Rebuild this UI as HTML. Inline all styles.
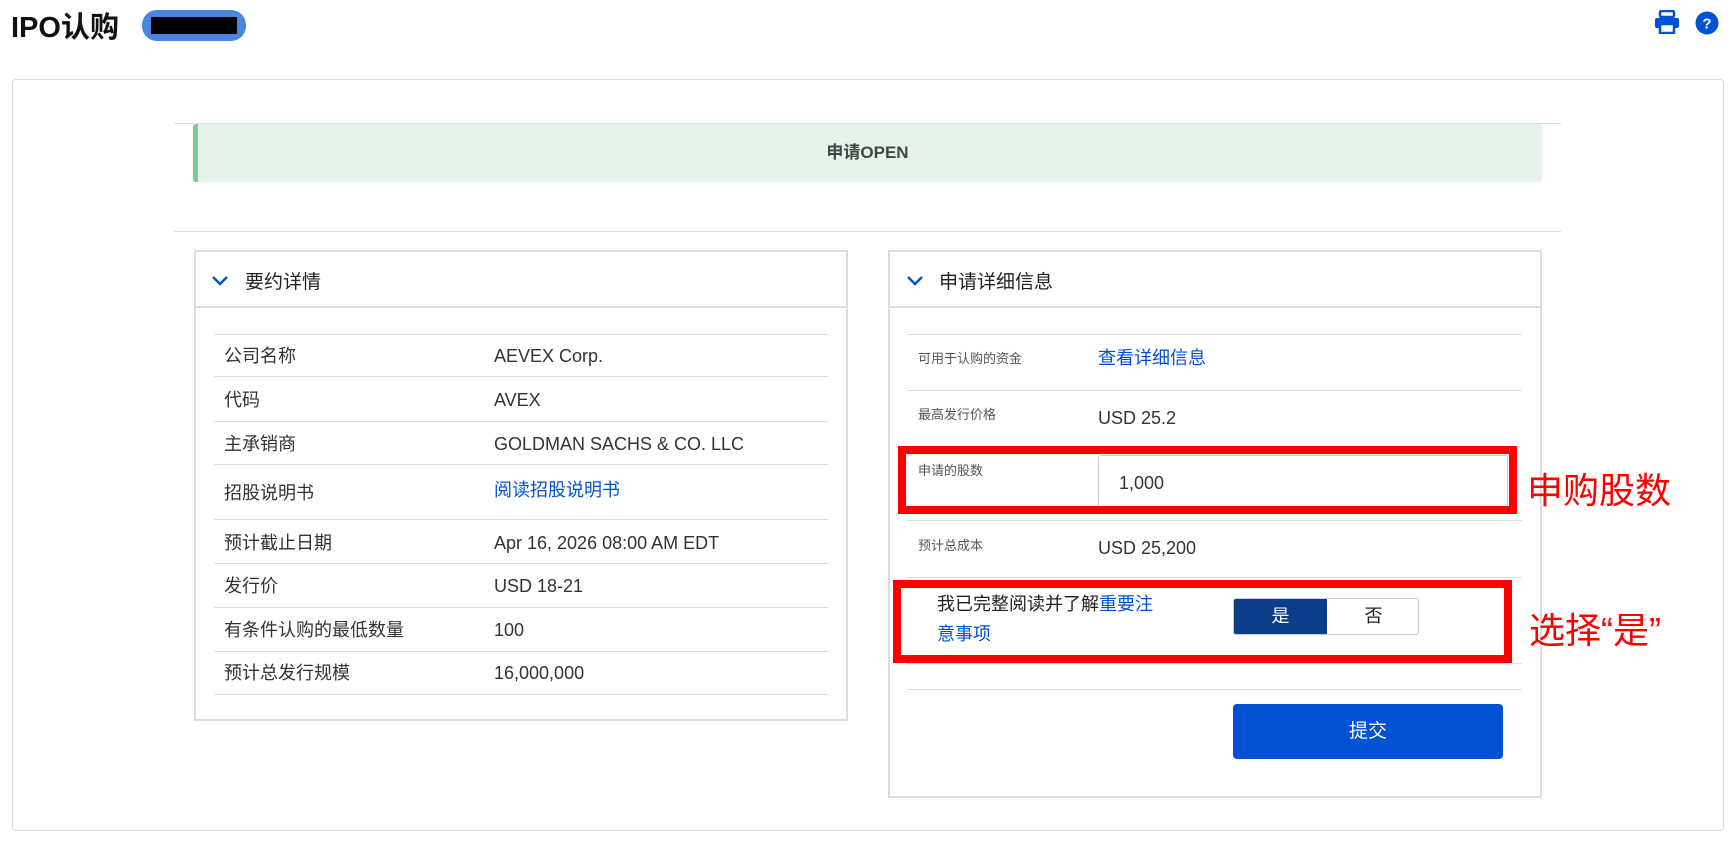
<!DOCTYPE html><html><head><meta charset="utf-8"><style>
*{margin:0;padding:0;box-sizing:border-box}
body{width:1736px;height:844px;background:#fff;font-family:"Liberation Sans","Noto Sans CJK SC",sans-serif;color:#333;position:relative;overflow:hidden}
.a{position:absolute}
.t{white-space:nowrap}
.hl{position:absolute;height:1px;background:#ddd}
.lab{font-size:18px;color:#333}
.rl{font-size:13px;color:#555}
.rv{font-size:18px;color:#333}
</style></head><body>
<div class="a t" style="left:11px;top:4px;font-size:29px;font-weight:bold;color:#111">IPO认购</div>
<div class="a" style="left:142px;top:10px;width:104px;height:31px;background:#4a86e0;border-radius:15px"><div class="a" style="left:9px;top:7px;width:86px;height:17px;background:#000"></div></div>
<svg class="a" style="left:1654px;top:10px" width="26" height="24" viewBox="0 0 26 24"><rect x="6" y="1" width="14" height="6" rx="1.5" fill="none" stroke="#0052d4" stroke-width="2.5"/><rect x="1" y="8" width="24" height="10" rx="2" fill="#0052d4"/><rect x="6" y="14" width="14" height="9" fill="#fff" stroke="#0052d4" stroke-width="2.5"/></svg>
<svg class="a" style="left:1695px;top:11px" width="24" height="24" viewBox="0 0 24 24"><circle cx="12" cy="12" r="11.5" fill="#0052d4"/><text x="12" y="17.5" text-anchor="middle" font-size="15" font-weight="bold" fill="#fff" font-family="Liberation Sans">?</text></svg>
<div class="a" style="left:12px;top:79px;width:1712px;height:752px;border:1px solid #ddd;border-radius:4px"></div>
<div class="hl" style="left:174px;top:123px;width:1387px"></div>
<div class="a" style="left:193px;top:124px;width:1349px;height:58px;background:#e4f4ea;border-left:5px solid #7ccb9e;border-radius:3px"></div>
<div class="a t" style="left:193px;top:138px;width:1349px;text-align:center;font-size:17px;font-weight:bold;color:#444">申请OPEN</div>
<div class="hl" style="left:174px;top:231px;width:1387px"></div>
<!-- left panel -->
<div class="a" style="left:194px;top:250px;width:654px;height:471px;border:2px solid #ddd"></div>
<div class="hl" style="left:194px;top:306px;width:654px;height:2px"></div>
<svg class="a" style="left:211px;top:275px" width="18" height="12" viewBox="0 0 18 12"><path d="M2 2 L9 9 L16 2" fill="none" stroke="#0052d4" stroke-width="2.5"/></svg>
<div class="a t" style="left:245px;top:267px;font-size:19px;color:#222">要约详情</div>
<div class="hl" style="left:214px;top:334px;width:614px"></div>
<div class="hl" style="left:214px;top:376px;width:614px"></div>
<div class="hl" style="left:214px;top:421px;width:614px"></div>
<div class="hl" style="left:214px;top:464px;width:614px"></div>
<div class="hl" style="left:214px;top:519px;width:614px"></div>
<div class="hl" style="left:214px;top:563px;width:614px"></div>
<div class="hl" style="left:214px;top:607px;width:614px"></div>
<div class="hl" style="left:214px;top:651px;width:614px"></div>
<div class="hl" style="left:214px;top:694px;width:614px"></div>
<div class="a t lab" style="left:224px;top:342px">公司名称</div><div class="a t lab" style="left:494px;top:346px">AEVEX Corp.</div>
<div class="a t lab" style="left:224px;top:386px">代码</div><div class="a t lab" style="left:494px;top:390px">AVEX</div>
<div class="a t lab" style="left:224px;top:430px">主承销商</div><div class="a t lab" style="left:494px;top:434px">GOLDMAN SACHS &amp; CO. LLC</div>
<div class="a t lab" style="left:224px;top:479px">招股说明书</div><div class="a t lab" style="left:494px;top:476px;color:#0052d4">阅读招股说明书</div>
<div class="a t lab" style="left:224px;top:529px">预计截止日期</div><div class="a t lab" style="left:494px;top:533px">Apr 16, 2026 08:00 AM EDT</div>
<div class="a t lab" style="left:224px;top:572px">发行价</div><div class="a t lab" style="left:494px;top:576px">USD 18-21</div>
<div class="a t lab" style="left:224px;top:616px">有条件认购的最低数量</div><div class="a t lab" style="left:494px;top:620px">100</div>
<div class="a t lab" style="left:224px;top:659px">预计总发行规模</div><div class="a t lab" style="left:494px;top:663px">16,000,000</div>
<!-- right panel -->
<div class="a" style="left:888px;top:250px;width:654px;height:548px;border:2px solid #ddd"></div>
<div class="hl" style="left:888px;top:306px;width:654px;height:2px"></div>
<svg class="a" style="left:906px;top:275px" width="18" height="12" viewBox="0 0 18 12"><path d="M2 2 L9 9 L16 2" fill="none" stroke="#0052d4" stroke-width="2.5"/></svg>
<div class="a t" style="left:939px;top:267px;font-size:19px;color:#222">申请详细信息</div>
<div class="hl" style="left:907px;top:334px;width:615px"></div>
<div class="hl" style="left:907px;top:390px;width:615px"></div>
<div class="hl" style="left:907px;top:520px;width:615px"></div>
<div class="hl" style="left:907px;top:577px;width:615px"></div>
<div class="hl" style="left:907px;top:663px;width:615px"></div>
<div class="hl" style="left:907px;top:689px;width:615px"></div>
<div class="a t rl" style="left:918px;top:348px">可用于认购的资金</div><div class="a t rv" style="left:1098px;top:344px;color:#0052d4">查看详细信息</div>
<div class="a t rl" style="left:918px;top:404px">最高发行价格</div><div class="a t rv" style="left:1098px;top:408px">USD 25.2</div>
<div class="a" style="left:1098px;top:455px;width:410px;height:56px;border:1px solid #ccc;border-radius:3px;background:#fff"></div>
<div class="a t rl" style="left:918px;top:460px">申请的股数</div><div class="a t rv" style="left:1119px;top:473px">1,000</div>
<div class="a t rl" style="left:918px;top:535px">预计总成本</div><div class="a t rv" style="left:1098px;top:538px">USD 25,200</div>
<div class="a t" style="left:937px;top:589px;font-size:18px;color:#222;line-height:30px">我已完整阅读并了解<span style="color:#0052d4">重要注</span><br><span style="color:#0052d4">意事项</span></div>
<div class="a" style="left:1233px;top:598px;width:186px;height:37px;border:1px solid #ccc;border-radius:3px;overflow:hidden"><div class="a" style="left:0;top:0;width:93px;height:37px;background:#0a3d8a;color:#fff;font-size:18px;text-align:center;line-height:35px">是</div><div class="a" style="left:93px;top:0;width:93px;height:37px;color:#222;font-size:18px;text-align:center;line-height:35px">否</div></div>
<div class="a" style="left:1233px;top:704px;width:270px;height:55px;background:#0052d4;border-radius:4px;color:#fff;font-size:19px;text-align:center;line-height:55px">提交</div>
<!-- annotations -->
<div class="a" style="left:898px;top:446px;width:619px;height:68px;border:8px solid #f00"></div>
<div class="a" style="left:893px;top:580px;width:619px;height:83px;border:8px solid #f00"></div>
<div class="a t" style="left:1527px;top:462px;font-size:36px;color:#f00">申购股数</div>
<div class="a t" style="left:1529px;top:602px;font-size:36px;color:#f00">选择“是”</div>
</body></html>
